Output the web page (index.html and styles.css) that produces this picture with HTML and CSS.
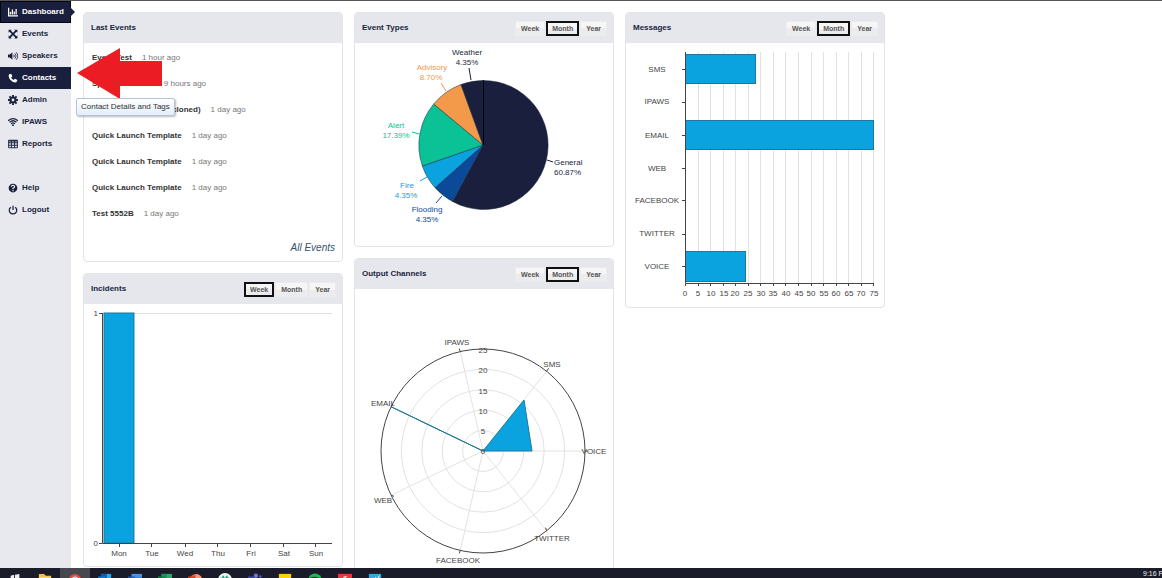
FILE: index.html
```html
<!DOCTYPE html>
<html lang="en">
<head>
<meta charset="utf-8">
<meta name="viewport" content="width=device-width, initial-scale=1">
<title>Dashboard</title>
<link rel="stylesheet" href="styles.css">
</head>
<body>
<div class="app">
  <nav class="sidebar" aria-label="Main">
    <a class="nav-item current" href="#"><svg class="icon" viewBox="0 0 16 16"><path d="M1 1v13h15M4 12V8M7 12V4M10 12V7M13 12V3" fill="none" stroke="currentColor" stroke-width="2"/></svg>Dashboard</a>
    <a class="nav-item" href="#"><svg class="icon" viewBox="0 0 16 16"><path d="M1 1h5L4.500 2.500 8 6l3.500-3.500L10 1h5v5l-1.500-1.500L10 8l3.500 3.500L15 10v5h-5l1.500-1.500L8 10l-3.500 3.500L6 15H1v-5l1.500 1.500L6 8 2.500 4.500 1 6z" fill="currentColor"/></svg>Events</a>
    <a class="nav-item" href="#"><svg class="icon" viewBox="0 0 16 16"><path d="M0 5.500h3L7 2v12L3 10.500H0z" fill="currentColor"/><path d="M9 6q2 2 0 4M11 4q4 4 0 8M13 2q5.500 6 0 12" fill="none" stroke="currentColor" stroke-width="1.400"/></svg>Speakers</a>
    <a class="nav-item selected" href="#"><svg class="icon" viewBox="0 0 16 16"><path d="M2 2l3-1 2 4-2 2q1 3 4 4l2-2 4 2-1 3q-1 1-3 1Q3 13 1 5q0-2 1-3z" fill="currentColor"/></svg>Contacts</a>
    <a class="nav-item" href="#"><svg class="icon" viewBox="0 0 16 16"><circle cx="8" cy="8" r="4" fill="none" stroke="currentColor" stroke-width="3.400"/><path d="M8 0v3M8 13v3M0 8h3M13 8h3M2.300 2.300l2 2M11.700 11.700l2 2M2.300 13.700l2-2M11.700 4.300l2-2" stroke="currentColor" stroke-width="3"/></svg>Admin</a>
    <a class="nav-item" href="#"><svg class="icon" viewBox="0 0 16 16"><path d="M0 6q8-7 16 0M2.500 8.500q5.500-5 11 0M5 11q3-3 6 0" fill="none" stroke="currentColor" stroke-width="2"/><circle cx="8" cy="13" r="1.500" fill="currentColor"/></svg>IPAWS</a>
    <a class="nav-item" href="#"><svg class="icon" viewBox="0 0 16 16"><path d="M1 2h14v12H1zM1 6h14M1 10h14M5.500 2v12M10.500 2v12" fill="none" stroke="currentColor" stroke-width="1.500"/><path d="M1 2h14v2H1z" fill="currentColor"/></svg>Reports</a>
    <a class="nav-item secondary" href="#"><svg class="icon" viewBox="0 0 16 16"><circle cx="8" cy="8" r="7" fill="currentColor"/><path d="M5.500 6q0-2.500 2.500-2.500T10.500 6Q10.500 7 8 8.500V10M8 11v2" fill="none" stroke="#fff" stroke-width="1.800"/></svg>Help</a>
    <a class="nav-item" href="#"><svg class="icon" viewBox="0 0 16 16"><path d="M4.500 3.500a6 6 0 1 0 7 0M8 1v7" fill="none" stroke="currentColor" stroke-width="2"/></svg>Logout</a>
  </nav>

  <main class="board">
    <div class="column">
      <section class="card">
        <header class="card-head"><h2>Last Events</h2></header>
        <ul class="events">
          <li><strong>Event Test</strong><span>1 hour ago</span></li>
          <li><strong>Speaker Launch</strong><span>9 hours ago</span></li>
          <li><strong>Phone Launch Alert (cloned)</strong><span>1 day ago</span></li>
          <li><strong>Quick Launch Template</strong><span>1 day ago</span></li>
          <li><strong>Quick Launch Template</strong><span>1 day ago</span></li>
          <li><strong>Quick Launch Template</strong><span>1 day ago</span></li>
          <li><strong>Test 5552B</strong><span>1 day ago</span></li>
        </ul>
        <a class="all-events" href="#">All Events</a>
      </section>

      <section class="card">
        <header class="card-head"><h2>Incidents</h2>
          <div class="range"><button class="on">Week</button><button>Month</button><button>Year</button></div>
        </header>
        <svg class="chart" viewBox="0 0 258 262">
          <path class="grid" d="M18 9.500H248"/>
          <rect class="bar" x="20" y="9" width="30" height="230"/>
          <path class="axis" d="M18.500 9V239.500H248M15 9.500h3M15 239.500h3M35.500 240v3M67.500 240v3M101.500 240v3M133.500 240v3M166.500 240v3M199.500 240v3M231.500 240v3"/>
          <g class="label end"><text x="14" y="12">1</text><text x="14" y="242">0</text></g>
          <g class="label"><text x="35" y="252">Mon</text><text x="68" y="252">Tue</text><text x="101" y="252">Wed</text><text x="134" y="252">Thu</text><text x="167" y="252">Fri</text><text x="200" y="252">Sat</text><text x="232" y="252">Sun</text></g>
        </svg>
      </section>
    </div>

    <div class="column">
      <section class="card">
        <header class="card-head"><h2>Event Types</h2>
          <div class="range"><button>Week</button><button class="on">Month</button><button>Year</button></div>
        </header>
        <svg class="chart" viewBox="0 0 258 203">
          <g class="pie">
            <path class="navy" d="M128 102V37.500A64.500 64.500 0 1 1 97.500 158.500z"/>
            <path class="blue" d="M128 102L97.500 158.500A64.500 64.500 0 0 1 80 144.700z"/>
            <path class="sky" d="M128 102L80 144.700A64.500 64.500 0 0 1 67.300 123z"/>
            <path class="green" d="M128 102L67.300 123A64.500 64.500 0 0 1 78.700 61z"/>
            <path class="orange" d="M128 102L78.700 61A64.500 64.500 0 0 1 106 41.500z"/>
            <path class="navy" d="M128 102L106 41.500A64.500 64.500 0 0 1 128 37.500z"/>
          </g>
          <path class="divider" d="M128.500 37V102"/>
          <g class="label pie-label">
            <g class="navy"><path d="M114 25l2 12"/><text x="112" y="12">Weather</text><text x="112" y="22">4.35%</text></g>
            <g class="orange"><path d="M86 40l5 8"/><text x="77" y="27">Advisory</text><text x="76" y="37">8.70%</text></g>
            <g class="green"><path d="M57 89l7 2"/><text x="41" y="85">Alert</text><text x="41" y="95">17.39%</text></g>
            <g class="sky"><path d="M65 138l7-4"/><text x="52" y="145">Fire</text><text x="51" y="155">4.35%</text></g>
            <g class="blue"><path d="M81 160l6-7"/><text x="72" y="169">Flooding</text><text x="72" y="179">4.35%</text></g>
            <g class="navy start"><path d="M192 117l6 2"/><text x="199" y="122">General</text><text x="199" y="132">60.87%</text></g>
          </g>
        </svg>
      </section>

      <section class="card">
        <header class="card-head"><h2>Output Channels</h2>
          <div class="range"><button>Week</button><button class="on">Month</button><button>Year</button></div>
        </header>
        <svg class="chart" viewBox="0 0 258 290">
          <g class="grid"><circle cx="128" cy="162" r="20.400"/><circle cx="128" cy="162" r="40.800"/><circle cx="128" cy="162" r="61.200"/><circle cx="128" cy="162" r="81.600"/>
            <path d="M128 162h102M128 162l63.600-79.700M128 162l-22.700-99.400M128 162l-91.900-44.300M128 162l-91.900 44.300M128 162l-22.700 99.400M128 162l63.600 79.700"/></g>
          <path class="bar" d="M128 162L36 117.700 128 162l41-51 8 51z"/>
          <circle class="axis" cx="128" cy="162" r="102"/>
          <path class="axis" d="M230 162h3M191.600 82.300l2-3M105.300 62.600l-1-3M36 117.700l2-3M36 206.300l3 1M105.300 261.400l-1 3M191.600 241.700l-1-3"/>
          <g class="label"><text x="102" y="56">IPAWS</text><text x="197" y="78">SMS</text><text x="28" y="117">EMAIL</text><text x="239" y="165">VOICE</text><text x="28" y="214">WEB</text><text x="103" y="274">FACEBOOK</text><text x="197" y="252">TWITTER</text>
            <text x="128" y="64">25</text><text x="128" y="84">20</text><text x="128" y="105">15</text><text x="128" y="125">10</text><text x="128" y="145">5</text><text x="128" y="165">0</text></g>
        </svg>
      </section>
    </div>

    <div class="column">
      <section class="card">
        <header class="card-head"><h2>Messages</h2>
          <div class="range"><button>Week</button><button class="on">Month</button><button>Year</button></div>
        </header>
        <svg class="chart" viewBox="0 0 258 264">
          <path class="grid" d="M72.500 9V240M84.500 9V240M97.500 9V240M109.500 9V240M122.500 9V240M134.500 9V240M147.500 9V240M159.500 9V240M172.500 9V240M185.500 9V240M197.500 9V240M210.500 9V240M222.500 9V240M235.500 9V240M247.500 9V240"/>
          <rect class="bar" x="59.500" y="11.500" width="70" height="29"/>
          <rect class="bar" x="59.500" y="77.500" width="188" height="29"/>
          <rect class="bar" x="59.500" y="208.500" width="60" height="30"/>
          <path class="axis" d="M59.500 9V240.500H248M56 26.500h3M56 59.500h3M56 92.500h3M56 125.500h3M56 157.500h3M56 191.500h3M56 223.500h3M59.500 241v2M72.500 241v2M84.500 241v2M97.500 241v2M109.500 241v2M122.500 241v2M134.500 241v2M147.500 241v2M159.500 241v2M172.500 241v2M185.500 241v2M197.500 241v2M210.500 241v2M222.500 241v2M235.500 241v2M247.500 241v2"/>
          <g class="label"><text x="31" y="29">SMS</text><text x="31" y="61">IPAWS</text><text x="31" y="95">EMAIL</text><text x="31" y="128">WEB</text><text x="31" y="160">FACEBOOK</text><text x="31" y="193">TWITTER</text><text x="31" y="226">VOICE</text>
            <text x="59" y="253">0</text><text x="72" y="253">5</text><text x="85" y="253">10</text><text x="98" y="253">15</text><text x="109" y="253">20</text><text x="122" y="253">25</text><text x="135" y="253">30</text><text x="147" y="253">35</text><text x="160" y="253">40</text><text x="173" y="253">45</text><text x="185" y="253">50</text><text x="198" y="253">55</text><text x="210" y="253">60</text><text x="223" y="253">65</text><text x="235" y="253">70</text><text x="248" y="253">75</text></g>
        </svg>
      </section>
    </div>
  </main>

  <svg class="pointer" viewBox="0 0 85 51" aria-hidden="true"><path d="M0 25L43 0V13H85V38H43V51z" fill="#ec1c24"/></svg>
  <div class="tooltip" role="tooltip">Contact Details and Tags</div>
</div>

<footer class="taskbar">
  <span class="task"><svg viewBox="0 0 16 16"><path d="M3 3l4-1v6H3zM8 2l5-1v7H8zM3 9h4v6l-4-1zM8 9h5v7l-5-1z" fill="#eee"/></svg></span>
  <span class="task"><svg viewBox="0 0 16 16"><path d="M1 1h6l2 2h6v12H1z" fill="#f2c14a"/><path d="M1 5h14v10H1z" fill="#fbe09a"/></svg></span>
  <span class="task open"><svg viewBox="0 0 16 16"><circle cx="8" cy="8" r="7" fill="#dd5144"/><path d="M8 8L2 5q-3 8 5 10z" fill="#1da462"/><path d="M8 8h7q0 6-7 7z" fill="#ffcd46"/><circle cx="8" cy="8" r="3.500" fill="#4c8bf5" stroke="#fff"/></svg></span>
  <span class="task"><svg viewBox="0 0 16 16"><path d="M4 1h11v14H4z" fill="#28a8ea"/><path d="M4 1h6v5H4z" fill="#0a5ea8"/><path d="M0 4h8v9H0z" fill="#0f78d4"/></svg></span>
  <span class="task"><svg viewBox="0 0 16 16"><path d="M4 1h12v14H4z" fill="#4a93e8"/><path d="M4 5h12v10H4z" fill="#2b6cc4"/><path d="M0 4h8v9H0z" fill="#1d56b0"/></svg></span>
  <span class="task"><svg viewBox="0 0 16 16"><path d="M4 1h12v14H4z" fill="#2ea76a"/><path d="M4 1h6v5H4z" fill="#1f9156"/><path d="M0 4h8v9H0z" fill="#137e43"/></svg></span>
  <span class="task"><svg viewBox="0 0 16 16"><circle cx="9" cy="8" r="7" fill="#e8694a"/><path d="M9 1a7 7 0 0 1 7 7H9z" fill="#f49a80"/><path d="M0 4h8v9H0z" fill="#c9421f"/></svg></span>
  <span class="task"><svg viewBox="0 0 16 16"><circle cx="8" cy="8" r="8" fill="#eef6f4"/><path d="M6 3v10M10 3v10M3 6h10" stroke="#2e9c86" stroke-width="2"/></svg></span>
  <span class="task"><svg viewBox="0 0 16 16"><circle cx="9" cy="3" r="2.500" fill="#6f75d8"/><circle cx="14" cy="4" r="1.500" fill="#5059c9"/><path d="M5 6h11v9H5z" fill="#5a60c8"/><path d="M0 4h8v9H0z" fill="#4149a8"/></svg></span>
  <span class="task"><svg viewBox="0 0 16 16"><path d="M1 1h14v14H1z" fill="#fbd20a"/></svg></span>
  <span class="task"><svg viewBox="0 0 16 16"><circle cx="8" cy="8" r="7.500" fill="#1db954"/><path d="M3 6q5-2 10 1" fill="none" stroke="#142" stroke-width="2"/></svg></span>
  <span class="task"><svg viewBox="0 0 16 16"><path d="M0 1h16v14H0z" fill="#e23b3b"/><path d="M6 5l4-1M8 4v4" stroke="#fff"/></svg></span>
  <span class="task"><svg viewBox="0 0 16 16"><path d="M1 1h14v14H1z" fill="#35a7e0"/><path d="M8 5l3 2 2-4" fill="none" stroke="#fff"/></svg></span>
  <time class="clock">9:16 PM</time>
</footer>
</body>
</html>
```
FILE: styles.css
```css
* { box-sizing: border-box; }
body {
  margin: 0;
  height: 100vh;
  display: flex;
  flex-direction: column;
  overflow: hidden;
  background: #fff;
  color: #333;
  font: 8px/12px "Liberation Sans", Arial, sans-serif;
}
.app {
  position: relative;
  flex: 1;
  min-height: 0;
  display: flex;
  overflow: hidden;
  border-top: 1px solid #55555c;
}
.sidebar {
  width: 71px;
  flex: none;
  background: #e8e9ee;
}
.nav-item {
  display: flex;
  align-items: center;
  gap: 4px;
  height: 22px;
  padding-left: 8px;
  color: #1a1f3d;
  font-weight: bold;
  text-decoration: none;
}
.nav-item.selected, .nav-item.current { background: #1a1f3d; color: #fff; }
.nav-item.current {
  position: relative;
  padding-left: 7px;
  border: 1px solid #05060c;
}
.nav-item.current::after {
  content: "";
  position: absolute;
  left: 100%;
  top: 5px;
  border: 5px solid transparent;
  border-left-color: #1a1f3d;
  border-right: 0;
}
.nav-item.secondary { margin-top: 22px; }
.icon { width: 10px; height: 10px; }

.board {
  flex: 1;
  display: grid;
  grid-template-columns: repeat(4, 1fr);
  align-items: start;
  gap: 11px;
  padding: 11px 6px 0 12px;
}
.column { display: grid; gap: 11px; }
.card {
  min-width: 0;
  border: 1px solid #e2e3e8;
  border-radius: 4px;
  overflow: hidden;
}
.card-head {
  display: flex;
  align-items: center;
  justify-content: space-between;
  height: 30px;
  padding: 0 6px 0 7px;
  background: #e6e7ec;
}
.card-head h2 { margin: 0; font-size: 8px; color: #1a1f3d; }
.range { display: flex; gap: 1px; }
.range button {
  height: 15px;
  padding: 0 5px;
  border: 1px solid #ececee;
  background: linear-gradient(#f6f6f7 50%, #ececee 50%);
  color: #555;
  font: bold 7px/11px "Liberation Sans", Arial, sans-serif;
}
.range .on { border: 2px solid #111; padding: 0 4px; }

.events { list-style: none; margin: 0; padding: 2px 8px 0; }
.events li { display: flex; align-items: center; gap: 10px; height: 26px; }
.events span { color: #777; }
.all-events {
  display: block;
  padding: 14px 7px 6px;
  text-align: right;
  color: #33516f;
  font-size: 10px;
  line-height: 14px;
  font-style: italic;
  text-decoration: none;
}

.chart { display: block; width: 100%; height: auto; }
.grid { fill: none; stroke: #e2e2e2; }
.axis { fill: none; stroke: #444; }
.bar { fill: #0aa3e0; stroke: #21789c; }
.label { fill: #444; font-size: 8px; text-anchor: middle; }
.label.end { text-anchor: end; }
.start { text-anchor: start; }
.navy { fill: #1a1f3d; stroke: #1a1f3d; }
.blue { fill: #0b4a99; stroke: #0b4a99; }
.sky { fill: #0aa3e0; stroke: #0aa3e0; }
.green { fill: #0ac295; stroke: #0ac295; }
.orange { fill: #f2994a; stroke: #f2994a; }
.pie path { stroke: #14283c; stroke-opacity: .5; stroke-width: 1; }
.divider { stroke: #000; }
.pie-label text { stroke: none; }

.pointer { position: absolute; left: 77px; top: 47px; width: 85px; height: 51px; }
.tooltip {
  position: absolute;
  left: 76px;
  top: 97px;
  padding: 2px 4px;
  border: 1px solid #b9c3cf;
  border-radius: 2px;
  background: linear-gradient(#fff, #e3eefa);
  box-shadow: 1px 1px 2px #0004;
  white-space: nowrap;
  color: #333;
}

.taskbar {
  flex: none;
  display: flex;
  height: 10px;
  overflow: hidden;
  background: #1a1d29;
}
.task { flex: none; width: 30px; padding: 5px 8px 0; }
.task.open { background: #46474f; }
.task svg { display: block; width: 14px; height: 14px; }
.clock {
  margin-left: auto;
  width: 19px;
  overflow: hidden;
  white-space: nowrap;
  color: #eee;
  font-size: 7px;
}
```
